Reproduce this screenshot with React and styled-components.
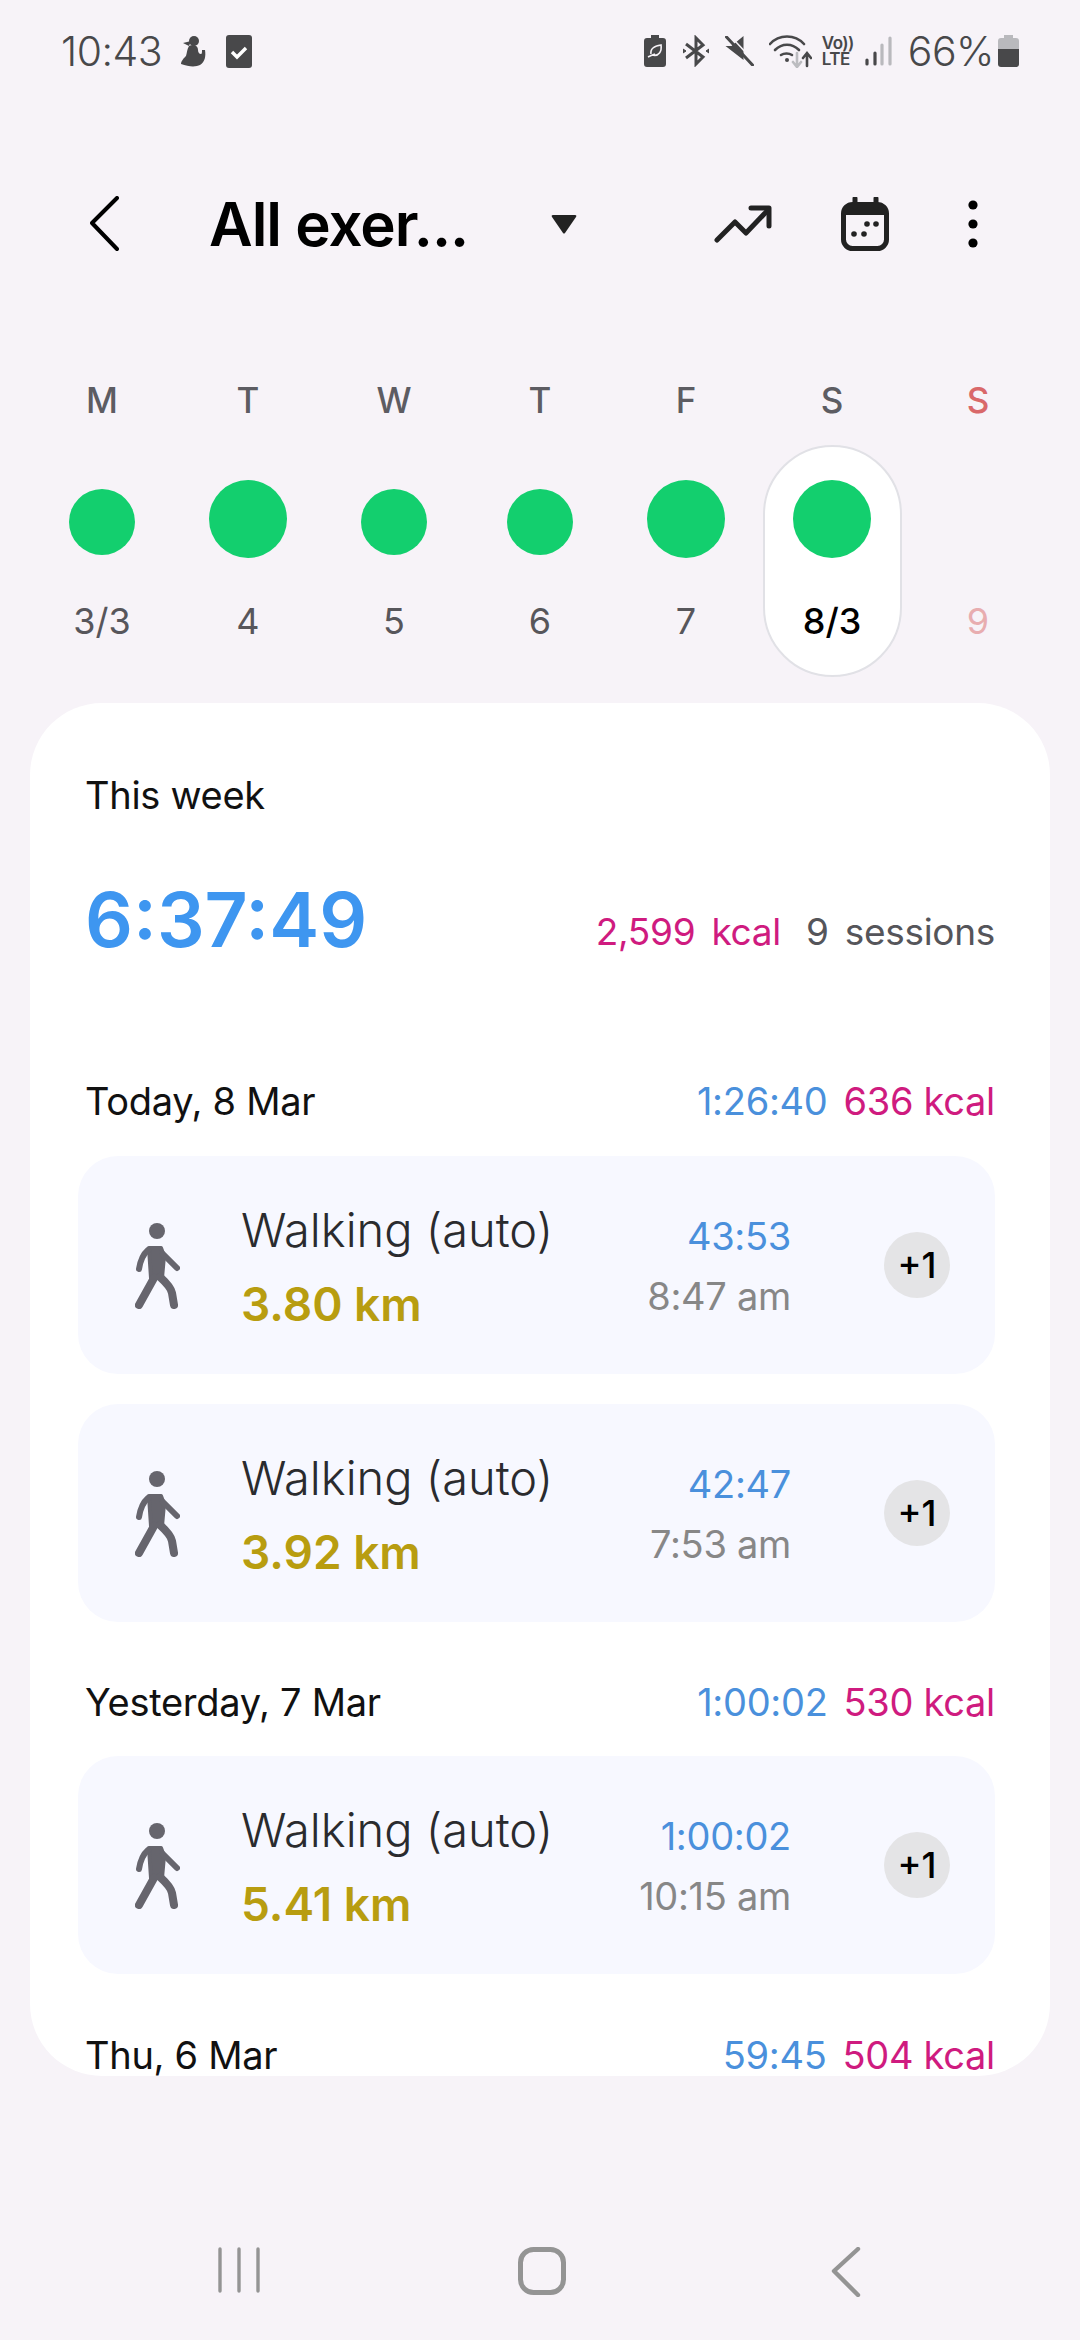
import React from "react";
import styled, {createGlobalStyle} from "styled-components";

const Global = createGlobalStyle`
    html, body {
        margin: 0;
        padding: 0;
        background: #f7f3f8;
    }
    * {
        box-sizing: border-box;
    }
`;

const Page = styled.div`
    width: 1080px;
    height: 2340px;
    background: #f7f3f8;
    font-family: Inter, "Noto Sans", sans-serif;
    overflow: hidden;
    display: flex;
    flex-direction: column;
`;

// status bar
const StatusBar = styled.div`
    height: 102px;
    padding: 0 61px 0 61px;
    display: flex;
    align-items: center;
    justify-content: space-between;
`;
const StatusGroup = styled.div`
    display: flex;
    align-items: center;
`;
const StatusText = styled.span`
    margin-left: ${p => p.$gap || 0}px;
    font-size: 41px;
    font-weight: 300;
    color: #48484a;
    letter-spacing: -0.5px;
    line-height: 1;
`;
const StatusIcon = styled.svg`
    display: block;
    flex: none;
    margin-left: ${p => p.$gap}px;
`;
const Volte = styled.div`
    margin-left: 10px;
    width: 30px;
    font-size: 17px;
    line-height: 16px;
    font-weight: 600;
    color: #48484a;
    letter-spacing: -0.5px;
`;

// header
const Header = styled.div`
    height: 146px;
    margin-top: 49px;
    padding-left: 90px;
    display: flex;
    align-items: center;
`;
const HeaderIcon = styled.svg`
    display: block;
    flex: none;
    margin-left: ${p => p.$gap}px;
`;
const Title = styled.h1`
    margin: 0 0 0 86px;
    padding-left: 4px;
    width: 346px;
    font-size: 60px;
    font-weight: 600;
    letter-spacing: -1px;
    color: #000;
    white-space: nowrap;
    line-height: 1;
`;

// week strip
const Week = styled.div`
    margin: 0 0 0 29px;
    width: 1022px;
    display: grid;
    grid-template-columns: repeat(7, 146px);
`;
const Day = styled.div`
    display: flex;
    flex-direction: column;
    align-items: center;
`;
const DayLetter = styled.div`
    height: 64px;
    margin-top: 83px;
    margin-bottom: 1px;
    line-height: 40px;
    font-size: 35px;
    font-weight: 550;
    color: ${p => (p.$sun ? "#d9686a" : "#5d5c62")};
`;
const DayBody = styled.div`
    width: 139px;
    height: 232px;
    padding-top: 33px;
    border-radius: 70px;
    display: flex;
    flex-direction: column;
    align-items: center;
    background: ${p => (p.$active ? "#fff" : "transparent")};
    border: 2px solid ${p => (p.$active ? "#e1e1e6" : "transparent")};
`;
const DotSlot = styled.div`
    height: 78px;
    display: flex;
    align-items: center;
    justify-content: center;
`;
const Dot = styled.div`
    width: ${p => (p.$big ? 78 : 66)}px;
    height: ${p => (p.$big ? 78 : 66)}px;
    margin-top: ${p => (p.$big ? 0 : 6)}px;
    border-radius: 50%;
    background: #13cf6e;
`;
const DayDate = styled.div`
    margin-top: 41px;
    line-height: 44px;
    font-size: 36px;
    font-weight: ${p => (p.$active ? 500 : 400)};
    color: ${p => (p.$active ? "#000" : p.$sun ? "#e8adb0" : "#57565b")};
`;

// white panel
const Panel = styled.div`
    margin: 26px 30px 0;
    height: 1373px;
    padding: 0 55px;
    background: #fff;
    border-radius: 72px;
    overflow: hidden;
`;
const WeekLabel = styled.div`
    padding-top: 68px;
    line-height: 48px;
    font-size: 38px;
    color: #111;
    letter-spacing: -0.3px;
`;
const Summary = styled.div`
    margin-top: 52px;
    height: 96px;
    display: flex;
    align-items: center;
    justify-content: space-between;
`;
const Total = styled.div`
    font-size: 75px;
    font-weight: 600;
    color: #3e96f0;
    line-height: 1;
`;
const SummaryStats = styled.div`
    display: flex;
    gap: 25px;
    margin-top: 24px;
    font-size: 37px;
    letter-spacing: -0.3px;
`;
const Stat = styled.span`
    color: ${p => p.$color};
    word-spacing: 6px;
`;
const DateRow = styled.div`
    margin-top: ${p => p.$top}px;
    height: 48px;
    margin-bottom: ${p => p.$bottom}px;
    display: flex;
    align-items: center;
    justify-content: space-between;
    font-size: 38px;
    letter-spacing: -0.3px;
    color: #111;
`;
const DateTotals = styled.div`
    display: flex;
    gap: 16px;
`;
const BlueText = styled.span`
    color: #4a90dc;
`;
const PinkText = styled.span`
    color: #cf1b7f;
`;
const Card = styled.div`
    margin-left: -7px;
    height: 218px;
    margin-bottom: ${p => p.$bottom || 0}px;
    border-radius: 40px;
    background: #f7f8ff;
    display: flex;
    align-items: center;
    padding: 0 45px 0 57px;
`;
const Walker = styled.svg`
    display: block;
    flex: none;
    margin-top: 2px;
    filter: blur(0.6px);
`;
const CardInfo = styled.div`
    margin-left: 60px;
    flex: 1;
`;
const CardTitle = styled.div`
    font-size: 47px;
    line-height: 60px;
    font-weight: 300;
    color: #2a2b2e;
    white-space: nowrap;
    margin-top: 1px;
`;
const Distance = styled.div`
    margin-top: 17px;
    font-size: 46px;
    line-height: 54px;
    font-weight: 600;
    color: #b89d10;
`;
const CardTimes = styled.div`
    text-align: right;
    margin-right: 93px;
    margin-top: 2px;
`;
const Duration = styled.div`
    font-size: 38px;
    line-height: 50px;
    letter-spacing: -0.3px;
    color: #4a90dc;
`;
const StartTime = styled.div`
    margin-top: 10px;
    font-size: 38px;
    line-height: 50px;
    letter-spacing: -0.3px;
    color: #878787;
`;
const Badge = styled.div`
    width: 66px;
    height: 66px;
    flex: none;
    border-radius: 50%;
    background: #e4e4e6;
    display: flex;
    align-items: center;
    justify-content: center;
    font-size: 36px;
    font-weight: 500;
    color: #000;
`;

// nav bar
const NavBar = styled.div`
    margin-top: 171px;
    padding-left: 218px;
    display: flex;
    align-items: flex-start;
`;
const NavIcon = styled.svg`
    display: block;
    flex: none;
    margin-left: ${p => p.$gap}px;
`;

const days = [
    {letter: "M", date: "3/3"},
    {letter: "T", date: "4", big: true},
    {letter: "W", date: "5"},
    {letter: "T", date: "6"},
    {letter: "F", date: "7", big: true},
    {letter: "S", date: "8/3", big: true, active: true},
    {letter: "S", date: "9", sun: true, empty: true},
];

function WalkerIcon() {
    return (
        <Walker width="46" height="86" viewBox="0 0 46 86" fill="none" stroke="#66656d" strokeLinecap="round" strokeLinejoin="round">
            <circle cx="22" cy="8" r="8" fill="#66656d" stroke="none"/>
            <path d="M14 25 H26 L29 33 L27 55 H16 Z" fill="#66656d" strokeWidth="4"/>
            <path d="M13 27 Q6 33 4 46" strokeWidth="6"/>
            <path d="M28 31 L42 45" strokeWidth="6"/>
            <path d="M19 55 L4 82" strokeWidth="8"/>
            <path d="M25 54 Q36 64 37 70 L39 82" strokeWidth="8"/>
        </Walker>
    );
}

function Activity({km, duration, time, bottom}) {
    return (
        <Card $bottom={bottom}>
            <WalkerIcon/>
            <CardInfo>
                <CardTitle>Walking (auto)</CardTitle>
                <Distance>{km}</Distance>
            </CardInfo>
            <CardTimes>
                <Duration>{duration}</Duration>
                <StartTime>{time}</StartTime>
            </CardTimes>
            <Badge>+1</Badge>
        </Card>
    );
}

function App() {
    return (
        <Page>
            <Global/>
            <StatusBar>
                <StatusGroup>
                    <StatusText>10:43</StatusText>
                    <StatusIcon $gap={18} width="26" height="32" viewBox="0 0 26 32" fill="#48484a">
                        <circle cx="14" cy="6" r="5"/>
                        <path d="M3 8 L11 6 L9 11 Z"/>
                        <path d="M9 11 C13 9 18 10 18 15 C18 17 19 19 21 19 C22 19 22 17 22 15 L25 15 C26 21 25 27 20 30 C16 32 9 32 1 29 C1 26 4 23 6 21 C7 18 7 14 9 11 Z"/>
                    </StatusIcon>
                    <StatusIcon $gap={20} width="26" height="33" viewBox="0 0 26 33">
                        <rect width="26" height="33" rx="3" fill="#48484a"/>
                        <path d="M6 17 L11 22 L20 13" fill="none" stroke="#fff" strokeWidth="3.4"/>
                    </StatusIcon>
                </StatusGroup>
                <StatusGroup>
                    <StatusIcon $gap={0} width="22" height="32" viewBox="0 0 22 32">
                        <path d="M7 0 H15 V3 H19 Q22 3 22 6 V29 Q22 32 19 32 H3 Q0 32 0 29 V6 Q0 3 3 3 H7 Z" fill="#48484a"/>
                        <path d="M4 22 Q8 20 11 19 M7 19 C6 13 11 11 17 10 C18 16 15 22 8 20" fill="none" stroke="#f7f3f8" strokeWidth="1.6"/>
                    </StatusIcon>
                    <StatusIcon $gap={17} width="26" height="32" viewBox="0 0 26 32" fill="none" stroke="#48484a" strokeWidth="3">
                        <path d="M3 9 L20 22 L13 29 V3 L20 10 L3 23"/>
                        <path d="M0 14 L3 16 L0 18 Z M26 14 L23 16 L26 18 Z" fill="#48484a" strokeWidth="1"/>
                    </StatusIcon>
                    <StatusIcon $gap={16} width="29" height="30" viewBox="0 0 28 30">
                        <path d="M0 10 H6 L18 0 V24 Z" fill="#48484a"/>
                        <path d="M1 1 L27 29" stroke="#48484a" strokeWidth="3" strokeLinecap="round"/>
                        <path d="M1 1 L27 29" stroke="#f7f3f8" strokeWidth="1.5" transform="translate(3 -2)"/>
                    </StatusIcon>
                    <StatusIcon $gap={15} width="43" height="34" viewBox="0 0 43 34" fill="none" stroke="#48484a" strokeWidth="2.6" strokeLinecap="round">
                        <path d="M1 10 C10 0 26 0 35 10"/>
                        <path d="M6 16 C13 9 23 9 30 16"/>
                        <path d="M12 21 C15 19 20 19 23 21"/>
                        <circle cx="18" cy="26" r="2" fill="#48484a" stroke="none"/>
                        <path d="M28 19 V32 M24 28 L28 33 L32 28" stroke="#bcbcc0"/>
                        <path d="M38 32 V20 M34 24 L38 19 L42 24"/>
                    </StatusIcon>
                    <Volte>Vo))<br/>LTE</Volte>
                    <StatusIcon $gap={13} width="27" height="30" viewBox="0 0 27 30" fill="none" strokeWidth="3.2" strokeLinecap="round">
                        <path d="M2 24 V28" stroke="#48484a"/>
                        <path d="M10 17 V28" stroke="#48484a"/>
                        <path d="M17 9 V28 M25 2 V28" stroke="#b9b9bd"/>
                    </StatusIcon>
                    <StatusText $gap={16}>66%</StatusText>
                    <StatusIcon $gap={4} width="21" height="32" viewBox="0 0 21 32">
                        <path d="M6 0 H15 V3 H18 Q21 3 21 6 V14 H0 V6 Q0 3 3 3 H6 Z" fill="#b9b9bd"/>
                        <path d="M0 14 H21 V29 Q21 32 18 32 H3 Q0 32 0 29 Z" fill="#48484a"/>
                    </StatusIcon>
                </StatusGroup>
            </StatusBar>

            <Header>
                <HeaderIcon $gap={0} width="29" height="56" viewBox="0 0 29 56" fill="none" stroke="#000" strokeWidth="4" strokeLinecap="round" strokeLinejoin="round">
                    <path d="M27 2 L2 27 L27 53"/>
                </HeaderIcon>
                <Title>All exer...</Title>
                <HeaderIcon $gap={0} width="26" height="19" viewBox="0 0 26 19" fill="#222">
                    <path d="M2 0 H24 Q26 0 25 2 L14 18 Q13 19 12 18 L1 2 Q0 0 2 0 Z"/>
                </HeaderIcon>
                <HeaderIcon $gap={137} width="58" height="38" viewBox="0 0 58 38" fill="none" stroke="#222" strokeWidth="5" strokeLinecap="round" strokeLinejoin="round">
                    <path d="M3 35 L21 17 L32 28 L54 5"/>
                    <path d="M37 3 H55 V21"/>
                </HeaderIcon>
                <HeaderIcon $gap={69} width="48" height="54" viewBox="0 0 48 54">
                    <rect x="2.5" y="7.5" width="43" height="44" rx="9" fill="none" stroke="#222" strokeWidth="5"/>
                    <path d="M2.5 18 V16 Q2.5 7.5 11 7.5 H37 Q45.5 7.5 45.5 16 V18 Z" fill="#222"/>
                    <path d="M14 1.5 V10 M35 1.5 V10" stroke="#222" strokeWidth="5" strokeLinecap="round"/>
                    <circle cx="13" cy="37" r="2.8" fill="#222"/>
                    <circle cx="23" cy="37" r="2.8" fill="#222"/>
                    <circle cx="26" cy="27" r="2.8" fill="#222"/>
                    <circle cx="35" cy="27" r="2.8" fill="#222"/>
                </HeaderIcon>
                <HeaderIcon $gap={79} width="10" height="48" viewBox="0 0 10 48" fill="#000">
                    <circle cx="5" cy="5" r="4.6"/>
                    <circle cx="5" cy="24" r="4.6"/>
                    <circle cx="5" cy="43" r="4.6"/>
                </HeaderIcon>
            </Header>

            <Week>
                {days.map((d, i) => (
                    <Day key={i}>
                        <DayLetter $sun={d.sun}>{d.letter}</DayLetter>
                        <DayBody $active={d.active}>
                            <DotSlot>{!d.empty && <Dot $big={d.big}/>}</DotSlot>
                            <DayDate $active={d.active} $sun={d.sun}>{d.date}</DayDate>
                        </DayBody>
                    </Day>
                ))}
            </Week>

            <Panel>
                <WeekLabel>This week</WeekLabel>
                <Summary>
                    <Total>6:37:49</Total>
                    <SummaryStats>
                        <Stat $color="#cf1b7f">2,599 kcal</Stat>
                        <Stat $color="#55555a">9 sessions</Stat>
                    </SummaryStats>
                </Summary>
                <DateRow $top={110} $bottom={31}>
                    <span>Today, 8 Mar</span>
                    <DateTotals><BlueText>1:26:40</BlueText><PinkText>636 kcal</PinkText></DateTotals>
                </DateRow>
                <Activity km="3.80 km" duration="43:53" time="8:47 am" bottom={30}/>
                <Activity km="3.92 km" duration="42:47" time="7:53 am"/>
                <DateRow $top={56} $bottom={30}>
                    <span>Yesterday, 7 Mar</span>
                    <DateTotals><BlueText>1:00:02</BlueText><PinkText>530 kcal</PinkText></DateTotals>
                </DateRow>
                <Activity km="5.41 km" duration="1:00:02" time="10:15 am"/>
                <DateRow $top={57} $bottom={30}>
                    <span>Thu, 6 Mar</span>
                    <DateTotals><BlueText>59:45</BlueText><PinkText>504 kcal</PinkText></DateTotals>
                </DateRow>
            </Panel>

            <NavBar>
                <NavIcon $gap={0} width="42" height="46" viewBox="0 0 42 46" fill="none" stroke="#949494" strokeWidth="3.4" strokeLinecap="round">
                    <path d="M2 2 V44 M21 2 V44 M40 2 V44"/>
                </NavIcon>
                <NavIcon $gap={258} width="48" height="48" viewBox="0 0 48 48" fill="none" stroke="#949494" strokeWidth="5">
                    <rect x="2.5" y="2.5" width="43" height="43" rx="13"/>
                </NavIcon>
                <NavIcon $gap={265} width="30" height="50" viewBox="0 0 30 50" fill="none" stroke="#949494" strokeWidth="4.4" strokeLinecap="round" strokeLinejoin="round">
                    <path d="M27 2 L3 24 L27 48"/>
                </NavIcon>
            </NavBar>
        </Page>
    );
}

export default App;
